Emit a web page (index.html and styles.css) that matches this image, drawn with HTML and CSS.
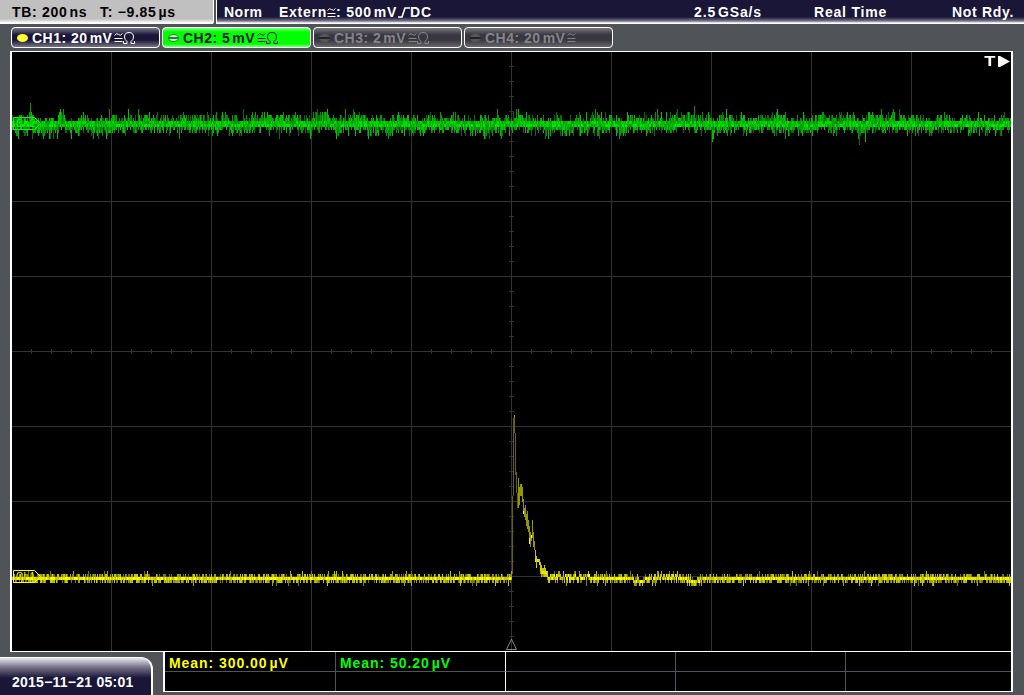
FILE: index.html
```html
<!DOCTYPE html>
<html lang="en">
<head>
  <meta charset="UTF-8" />
  <meta name="viewport" content="width=device-width, initial-scale=1" />
  <title>Oscilloscope</title>
  <link rel="stylesheet" href="styles.css">
</head>
<body>
  <header class="topbar">
    <div class="timebase"><span class="tb">TB: 200<i></i>ns</span><span class="tpos">T: −9.85<i></i>µs</span></div>
    <div class="status">
      <span class="mode">Norm</span>
      <span class="trigger">Extern<svg class="bw" viewBox="0 0 9 9"><path d="M0.5 2.5q2-3 4-1t4-1M0.5 5.5h8M0.5 8.5h8"/></svg>: 500<i></i>mV<svg class="edge" viewBox="0 0 12 11"><path d="M0 10h4l3-9h5"/></svg>DC</span>
      <span class="rate">2.5<i></i>GSa/s</span>
      <span class="acq">Real Time</span>
      <span class="state">Not Rdy.</span>
    </div>
  </header>

  <nav class="channels">
    <div class="ch ch1"><b class="led"></b><span>CH1: 20<i></i>mV</span><svg class="bw" viewBox="0 0 9 9"><path d="M0.5 2.5q2-3 4-1t4-1M0.5 5.5h8M0.5 8.5h8"/></svg><svg class="ohm" viewBox="0 0 12 12"><path d="M0.500 9v2.500h3.500v-2Q1.500 7.500 1.500 5Q1.500 .5 6 .5T10.500 5Q10.500 7.500 8 9.500v2h3.500V9"/></svg></div>
    <div class="ch ch2"><b class="led"></b><span>CH2: 5<i></i>mV</span><svg class="bw" viewBox="0 0 9 9"><path d="M0.5 2.5q2-3 4-1t4-1M0.5 5.5h8M0.5 8.5h8"/></svg><svg class="ohm" viewBox="0 0 12 12"><path d="M0.500 9v2.500h3.500v-2Q1.500 7.500 1.500 5Q1.500 .5 6 .5T10.500 5Q10.500 7.500 8 9.500v2h3.500V9"/></svg></div>
    <div class="ch off"><b class="led"></b><span>CH3: 2<i></i>mV</span><svg class="bw" viewBox="0 0 9 9"><path d="M0.5 2.5q2-3 4-1t4-1M0.5 5.5h8M0.5 8.5h8"/></svg><svg class="ohm" viewBox="0 0 12 12"><path d="M0.500 9v2.500h3.500v-2Q1.500 7.500 1.500 5Q1.500 .5 6 .5T10.500 5Q10.500 7.500 8 9.500v2h3.500V9"/></svg></div>
    <div class="ch off"><b class="led"></b><span>CH4: 20<i></i>mV</span><svg class="bw" viewBox="0 0 9 9"><path d="M0.5 2.5q2-3 4-1t4-1M0.5 5.5h8M0.5 8.5h8"/></svg></div>
  </nav>

  <main class="screen">
    <canvas id="plot" width="999" height="599"></canvas>
    <div class="trig-flag"><span>T</span><svg viewBox="0 0 12 11"><path d="M0 0h2l10 5.500L2 11H0z"/></svg></div>
  </main>

  <footer class="bottom">
    <div class="clock">2015−11−21 05:01</div>
    <div class="measure">
      <div class="cell yellow">Mean: 300.00<i></i>µV</div>
      <div class="cell green">Mean: 50.20<i></i>µV</div>
      <div class="cell"></div>
      <div class="cell"></div>
      <div class="cell"></div>
      <div class="cell"></div>
      <div class="cell"></div>
      <div class="cell"></div>
      <div class="cell"></div>
      <div class="cell"></div>
    </div>
  </footer>

  <script src="scope.js"></script>
</body>
</html>
```
FILE: styles.css
```css
* {
  box-sizing: border-box;
}
body {
  margin: 0;
  width: 1024px;
  height: 695px;
  overflow: hidden;
  display: flex;
  flex-direction: column;
  background: #505357;
  color: #fff;
  font-family: "Liberation Sans", Arial, sans-serif;
  font-size: 14px;
  font-weight: bold;
  line-height: 16px;
  letter-spacing: 0.5px;
  white-space: nowrap;
}
i {
  display: inline-block;
  width: 2px;
}
svg {
  fill: none;
  stroke: currentColor;
  stroke-width: 1;
  flex: none;
}
.topbar {
  display: flex;
  height: 24px;
  gap: 2px;
}
.timebase {
  display: flex;
  width: 214px;
  padding: 4px 0 0 12px;
  color: #000;
  background: linear-gradient(#c0c0c0 19px, #fff 23px);
  border-right: 1px solid #fff;
  border-bottom-right-radius: 2px;
  letter-spacing: 0.7px;
}
.tb {
  width: 88px;
}
.status {
  display: flex;
  flex: 1;
  padding: 4px 0 0 7px;
  background: linear-gradient(#1a1638 17px, #77748a 21px, #fff 23px);
  border-left: 1px solid #fff;
}
.mode {
  width: 55px;
}
.trigger {
  width: 415px;
  letter-spacing: 0.75px;
}
.rate {
  width: 120px;
  letter-spacing: 0.85px;
}
.acq {
  width: 138px;
  letter-spacing: 0.8px;
}
.state {
  letter-spacing: 0.7px;
}
.bw {
  width: 9px;
  height: 9px;
  margin-left: 2px;
}
.trigger .bw {
  margin-left: 0;
}
.edge {
  width: 12px;
  height: 11px;
  margin-left: 1px;
  stroke-width: 1.6;
  vertical-align: -1px;
}
.channels {
  display: flex;
  gap: 2px;
  padding: 3px 0 0 11px;
  height: 27px;
}
.ch {
  display: flex;
  align-items: center;
  width: 149px;
  height: 21px;
  padding-left: 5px;
  border: 1px solid #fff;
  border-radius: 4px;
  background: linear-gradient(#77748a, #1a1638 7px, #1a1638 12px, #77748a);
}
.led {
  width: 11px;
  height: 8px;
  margin-right: 4px;
  border-radius: 50%;
  background: #ffff30;
}
.ohm {
  width: 12px;
  height: 12px;
}
.ch2 {
  color: #1a1638;
  background: linear-gradient(#80ff80, #0f0 4px, #0f0 16px, #80ff80);
}
.ch2 .led {
  background: linear-gradient(#b0ffb0 2px, #288040 2px, #288040 4px, #b0ffb0 4px);
  border: 1px solid #507050;
}
.off {
  color: #84848a;
  background: linear-gradient(#77767a, #38363e 7px, #38363e 12px, #6a686e);
}
.off .led {
  background: linear-gradient(#55565a 3px, #222 3px, #222 5px, #55565a 5px);
}
.screen {
  position: relative;
  width: 1003px;
  height: 601px;
  margin-left: 10px;
  border: solid #fff;
  border-width: 1px 2px;
  background: #000;
}
#plot {
  display: block;
}
.trig-flag {
  position: absolute;
  top: 1px;
  right: 1px;
  display: flex;
  align-items: center;
  gap: 2px;
}
.trig-flag span {
  font-size: 14px;
  transform: scaleX(1.3);
  transform-origin: right;
}
.trig-flag svg {
  width: 12px;
  height: 11px;
  fill: #fff;
  stroke: none;
}
.bottom {
  display: flex;
  height: 43px;
}
.clock {
  width: 153px;
  height: 38px;
  margin: 5px 10px 0 0;
  padding: 16px 0 0 12px;
  border: solid #fff;
  border-width: 1px 2px 0 0;
  border-top-right-radius: 12px;
  background: linear-gradient(#e8e8ee, #77748a 9px, #1a1638 20px);
  letter-spacing: 0.25px;
}
.measure {
  display: grid;
  grid-template-columns: 171px 170px 170px 170px 1fr;
  grid-template-rows: 20px 19px;
  width: 850px;
  height: 40px;
  border: solid #fff;
  border-width: 0 2px 1px 2px;
  background: #000;
  letter-spacing: 0.95px;
}
.cell {
  padding: 3px 0 0 4px;
  border-right: 1px solid #505357;
}
.cell:nth-child(5n) {
  border-right: 0;
}
.cell:nth-child(-n+5) {
  border-bottom: 1px solid #505357;
}
.cell:nth-child(5n+2) {
  border-right-color: #fff;
}
.yellow {
  color: #ff0;
}
.green {
  color: #0f0;
}
```
FILE: scope.js
```js
const ctx = document.getElementById('plot').getContext('2d');

// canvas starts at screen pixel 12,52
ctx.translate(-12, -52);

function rect(x, y, w, h, color) {
  ctx.fillStyle = color;
  ctx.fillRect(x, y, w, h);
}

function drawGrid() {
  const c = '#333';
  for (let x = 111; x < 1011; x += 100) rect(x, 52, 1, 599, c);
  for (let y = 126; y < 651; y += 75) rect(12, y, 999, 1, c);
  for (let x = 31; x < 1011; x += 20) rect(x, 349, 1, 5, c);
  for (let y = 66; y < 651; y += 15) rect(509, y, 5, 1, c);
}

let seed = 7;
function rnd() {
  seed = (seed * 1664525 + 1013904223) >>> 0;
  return seed / 4294967296;
}

function pick(list) {
  return list[Math.floor(rnd() * list.length)];
}

const greens = ['#006e00', '#009b00', '#00be00'];
const yellows = ['#787800', '#a5a500', '#c8c800'];

function drawGreen() {
  let drift = 0;
  for (let x = 12; x < 1011; x++) {
    drift = drift * 0.75 + (rnd() - 0.5) * 1.3;
    const shift = Math.round(drift);
    let up = 1 + Math.floor(rnd() * 3.1) + shift;
    let down = 1 + Math.floor(rnd() * 3.2) - shift;
    if (rnd() < 0.06) up += 1;
    if (rnd() < 0.02) up += 2;
    if (rnd() < 0.06) down += 1;
    if (rnd() < 0.015) down += 2;
    up = Math.max(up, 1);
    down = Math.max(down, 1);
    // upper and lower tails fade out separately
    rect(x, 124 - up * 3, 1, up * 3, pick(greens));
    rect(x, 124, 1, down * 3, pick(greens));
    rect(x, 121, 1, 3, pick(['#009b00', '#00be00', '#00dc00']));
    rect(x, 124, 1, 3, pick(['#00a000', '#00c800', '#00e600']));
    if (down > 1) rect(x, 127, 1, 3, pick(['#008200', '#00a000', '#00c800']));
  }
}

function drawYellow() {
  for (let x = 12; x < 1011; x++) {
    if (x > 511 && x < 548) continue;
    let base = 577;
    if ((x > 633 && x < 655 || x > 686 && x < 704) && rnd() < 0.6) base = 580;
    if (x > 548 && x < 590 && rnd() < 0.3) base = 574;
    if (x > 655 && x < 680 && rnd() < 0.5) base = 574;
    if (rnd() < 0.55) rect(x, base - 3, 1, 3, pick(yellows));
    if (rnd() < 0.65) rect(x, base + 3, 1, 3, pick(yellows));
    if (rnd() < 0.04) rect(x, base - 6, 1, 6, pick(yellows));
    if (rnd() < 0.04) rect(x, base + 3, 1, 6, pick(yellows));
    rect(x, base, 1, 3, pick(['#c8c800', '#e6e600', '#ff0']));
  }
}

// [top, bottom] of every column of the pulse, from x = 512
const pulse = [
  [496, 574], [418, 496], [415, 433], [433, 475], [472, 493], [493, 508],
  [478, 508], [487, 505], [484, 496], [484, 496], [487, 502], [499, 514],
  [508, 517], [505, 520], [514, 526], [511, 529], [520, 532], [526, 544],
  [532, 547], [535, 541], [520, 538], [532, 547], [541, 550], [550, 562],
  [556, 568], [559, 562], [559, 562], [559, 565], [562, 571], [565, 574],
  [568, 574], [568, 574], [565, 574], [568, 574], [571, 574], [571, 577]
];

function drawPulse() {
  pulse.forEach((p, i) => {
    const bright = i > 22 ? '#c8c800' : i > 5 ? '#969600' : '#646400';
    rect(512 + i, p[0], 1, p[1] - p[0], bright);
    if (i > 22) rect(512 + i, p[1] - 3, 1, 3, '#e6e600');
    if (i > 27) rect(512 + i, p[1], 1, 3, pick(yellows));
  });
  rect(514, 415, 1, 3, '#a5a500');
  rect(523, 511, 1, 3, '#ff0');
  rect(529, 538, 1, 6, '#ff0');
  rect(531, 535, 1, 3, '#ff0');
}

// channel marker at the left edge
function drawMarker(y, color) {
  ctx.strokeStyle = color;
  ctx.lineWidth = 1;
  ctx.beginPath();
  ctx.moveTo(13.5, y + 0.5);
  ctx.lineTo(34.5, y + 0.5);
  ctx.lineTo(40.5, y + 6.5);
  ctx.lineTo(34.5, y + 12.5);
  ctx.lineTo(13.5, y + 12.5);
  ctx.closePath();
  ctx.stroke();
}

function drawLabel(text, y, color) {
  ctx.fillStyle = color;
  ctx.font = '10px "Liberation Sans"';
  ctx.fillText(text, 16, y + 10);
}

drawGrid();
drawLabel('Ch1', 570, '#ff0');
drawGreen();
drawYellow();
drawPulse();
drawLabel('Ch2', 117, '#0f0');
drawMarker(117, '#0f0');
drawMarker(570, '#ff0');

// trigger position
ctx.strokeStyle = '#888';
ctx.beginPath();
ctx.moveTo(511.5, 639);
ctx.lineTo(516.5, 649.5);
ctx.lineTo(506.5, 649.5);
ctx.closePath();
ctx.stroke();
```
